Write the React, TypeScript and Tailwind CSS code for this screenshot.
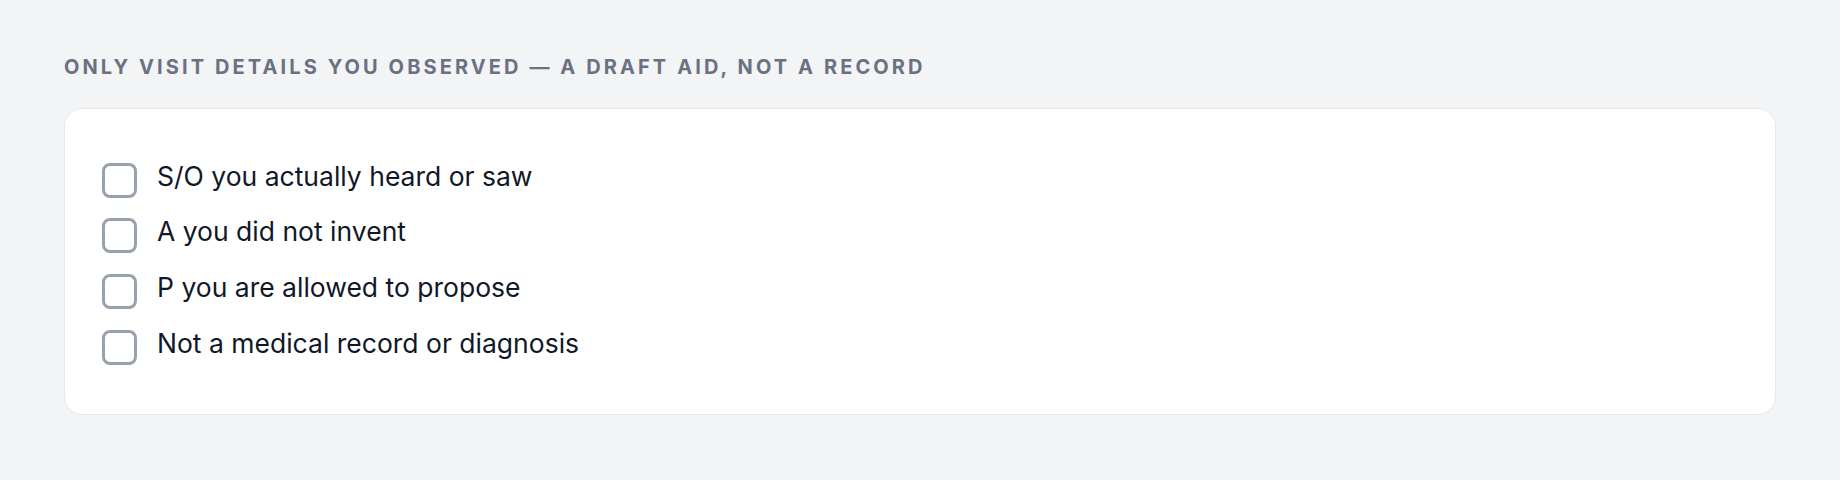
const ITEMS = [
  "S/O you actually heard or saw",
  "A you did not invent",
  "P you are allowed to propose",
  "Not a medical record or diagnosis",
];

const Checkbox = () => (
  <span className="mt-[6px] size-[35px] shrink-0 rounded-[8px] border-[3px] border-gray-400 bg-white" />
);

export default function App() {
  return (
    <div className="min-h-[480px] bg-gray-100 px-16 pt-[56px] font-['Inter',sans-serif]">
      <h2 className="text-[20px] leading-[23px] font-bold uppercase tracking-[3.1px] text-gray-500">
        Only visit details you observed — a draft aid, not a record
      </h2>

      <div className="mt-[29px] flex flex-col gap-[14.8px] rounded-[18px] border border-gray-200 bg-white px-[37px] pt-[47.6px] pb-[49px]">
        {ITEMS.map((item) => (
          <label key={item} className="flex items-start gap-[20px]">
            <Checkbox />
            <span className="text-[26.5px] leading-[38px] text-gray-900">
              {item}
            </span>
          </label>
        ))}
      </div>
    </div>
  );
}
